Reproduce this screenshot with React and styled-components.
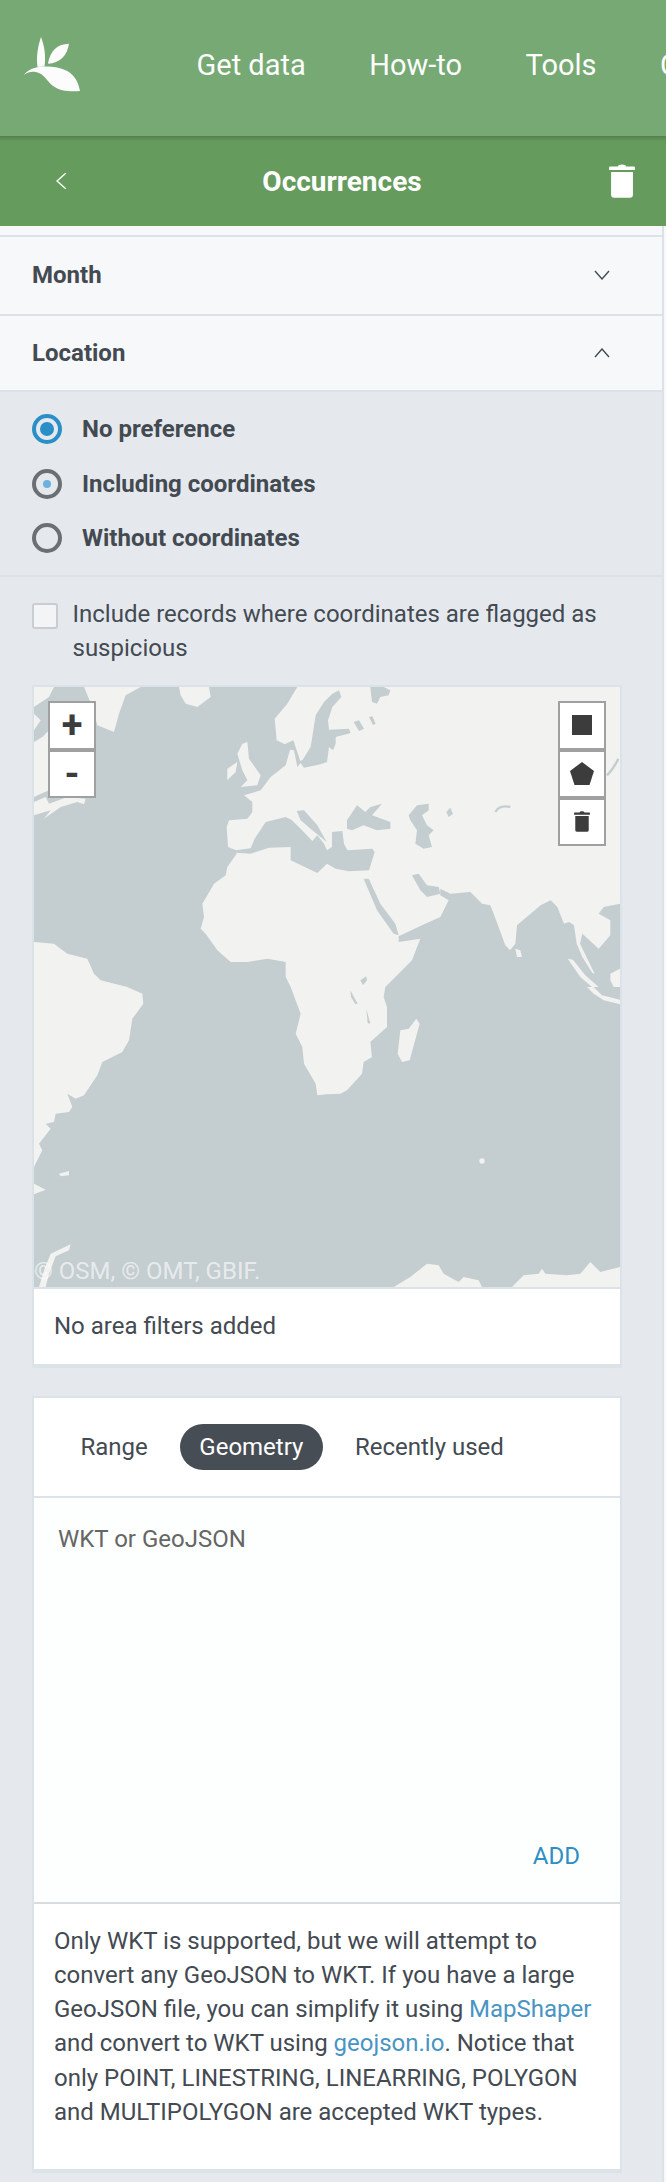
import styled, { createGlobalStyle } from "styled-components";

const GlobalStyle = createGlobalStyle`
  html, body {
    margin: 0;
    padding: 0;
    background: #f7f8fa;
  }
  * {
    box-sizing: border-box;
  }
`;

const Page = styled.div`
  width: 666px;
  height: 2182px;
  overflow: hidden;
  font-family: Roboto, "Liberation Sans", sans-serif;
  color: #434a52;
  background: #f7f8fa;
`;

const TopBar = styled.header`
  height: 136px;
  display: flex;
  align-items: center;
  padding: 0 0 6px 24px;
  background: #77a974;
  overflow: hidden;
`;

const Logo = styled.svg`
  width: 56px;
  height: 56px;
  flex: none;
  margin-right: 116.5px;
`;

const Nav = styled.nav`
  display: flex;
  gap: 63.5px;
  white-space: nowrap;
`;

const NavItem = styled.span`
  font-size: 29px;
  color: #fdfdfd;
`;

const SubBar = styled.div`
  height: 90px;
  display: flex;
  align-items: center;
  justify-content: space-between;
  position: relative;
  padding: 0 31px 0 56px;
  background: linear-gradient(#557f4f 0, #659b5c 5px);
`;

const SubTitle = styled.h1`
  position: absolute;
  left: 18px;
  right: 0;
  margin: 0;
  text-align: center;
  font-size: 28px;
  font-weight: 700;
  color: #fff;
`;

const Content = styled.main`
  width: 664px;
  height: 1956px;
  padding-top: 9px;
  border-right: 2px solid #dde2e8;
  background: linear-gradient(#f7f8fa 0, #f7f8fa 10px, #e5e9ed 10px);
`;

const Accordion = styled.div`
  height: ${(p) => p.$h}px;
  display: flex;
  align-items: center;
  justify-content: space-between;
  padding: 0 52px ${(p) => (p.$first ? 1 : 0)}px 32px;
  background: #f7f8fa;
  border-top: ${(p) => (p.$first ? "2px solid #dde2e8" : "0")};
  border-bottom: 2px solid #dde2e8;
  font-size: 24px;
  font-weight: 700;
`;

const Radios = styled.div`
  padding: 10px 32px 9px;
  border-bottom: 2px solid #dde2e8;
`;

const RadioRow = styled.div`
  height: 54.5px;
  display: flex;
  align-items: center;
  gap: 20px;
  font-size: 24px;
  font-weight: 700;
`;

const RadioMark = styled.span`
  width: 30px;
  height: 30px;
  flex: none;
  display: flex;
  align-items: center;
  justify-content: center;
  border-radius: 50%;
  border: 4px solid ${(p) => (p.$on ? "#2a8fc7" : "#6b6f73")};

  &::after {
    content: "";
    width: ${(p) => (p.$on ? 14 : p.$half ? 8 : 0)}px;
    height: ${(p) => (p.$on ? 14 : p.$half ? 8 : 0)}px;
    border-radius: 50%;
    background: ${(p) => (p.$on ? "#2a8fc7" : "#6cb2dc")};
  }
`;

const CheckRow = styled.div`
  display: flex;
  gap: 14.5px;
  padding: 20px 32px;
  font-size: 24px;
  line-height: 34px;
`;

const CheckBox = styled.span`
  width: 26px;
  height: 26px;
  flex: none;
  margin-top: 6px;
  border: 2px solid #c9ccd0;
  border-radius: 3px;
  background: #f2f4f6;
`;

const Card = styled.section`
  width: 590px;
  margin: ${(p) => p.$mt || 0}px 0 0 32px;
  border: 2px solid #dbe2e8;
  border-bottom-width: 4px;
  background: #fff;
`;

const MapWrap = styled.div`
  position: relative;
  height: 600px;
  background: #c4cdcf;
  overflow: hidden;
`;

const MapSvg = styled.svg`
  display: block;
  width: 586px;
  height: 600px;
  filter: blur(0.5px);
`;

const Credit = styled.span`
  position: absolute;
  left: 0;
  bottom: 2px;
  font-size: 24px;
  color: rgba(255, 255, 255, 0.62);
  white-space: nowrap;
`;

const ToolStack = styled.div`
  position: absolute;
  top: 14px;
  ${(p) => (p.$right ? "right: 14px;" : "left: 14px;")}
  width: 48px;
  display: flex;
  flex-direction: column;
`;

const ToolBtn = styled.div`
  width: 48px;
  height: 49px;
  margin-bottom: -1px;
  display: flex;
  align-items: center;
  justify-content: center;
  background: #fff;
  border: 2px solid #a0a0a0;
  color: #3c3c3c;
  font-size: 38px;
  font-weight: 700;
  line-height: 1;

  & + & {
    border-top-width: 3px;
  }
`;

const CardNote = styled.div`
  height: 77px;
  display: flex;
  align-items: center;
  padding-left: 20px;
  border-top: 2px solid #dbe2e8;
  font-size: 24px;
`;

const Tabs = styled.div`
  height: 100px;
  display: flex;
  align-items: center;
  padding-left: 27px;
  gap: 12.5px;
  border-bottom: 2px solid #dbe2e8;
`;

const Tab = styled.span`
  height: 46px;
  display: flex;
  align-items: center;
  padding: 0 19.5px;
  border-radius: 23px;
  font-size: 24px;
  color: ${(p) => (p.$on ? "#fff" : "#434a52")};
  background: ${(p) => (p.$on ? "#474d55" : "transparent")};
`;

const Editor = styled.div`
  height: 404px;
  padding: 24px 24px 0;
  position: relative;
  background: #fdfffe;
  font-size: 24px;
  line-height: 34px;
  color: #666;
`;

const AddLink = styled.span`
  position: absolute;
  right: 40px;
  top: 341px;
  color: #2d8fc4;
`;

const Help = styled.p`
  height: 267px;
  margin: 0;
  padding: 20px 20px 0;
  border-top: 2px solid #d8dcde;
  font-size: 24px;
  line-height: 34.3px;
`;

const HelpLink = styled.a`
  color: #4a94c4;
  text-decoration: none;
`;

const toPath = (pts) => "M" + pts.map((p) => p.join(",")).join("L") + "Z";

// land and water traced from the map, in 3x pixel coordinates
const LAND = [
  // eurasia + africa
  [[790,0],[1758,0],[1758,650],[1709,660],[1694,680],[1729,700],[1729,745],[1694,785],[1645,740],[1638,770],[1660,815],[1682,860],[1675,858],[1645,810],[1628,770],[1620,715],[1605,705],[1590,710],[1570,660],[1550,640],[1520,655],[1449,715],[1444,770],[1428,790],[1414,775],[1379,680],[1369,655],[1344,650],[1309,615],[1249,620],[1219,605],[1219,625],[1244,640],[1219,690],[1164,715],[1094,748],[1094,765],[1159,755],[1134,820],[1054,900],[1049,930],[1059,960],[1059,1020],[1009,1065],[1014,1110],[989,1125],[984,1160],[939,1210],[919,1220],[879,1222],[850,1225],[845,1190],[810,1130],[805,1080],[785,1040],[800,980],[770,900],[755,870],[755,825],[700,815],[640,825],[590,825],[550,790],[515,740],[500,725],[510,690],[505,650],[540,590],[575,565],[580,540],[608,500],[606,490],[582,480],[578,420],[585,400],[640,395],[655,375],[655,345],[630,325],[680,310],[710,270],[755,235],[768,188],[780,190],[790,240],[800,228],[795,210],[778,160],[752,172],[728,160],[722,95],[760,50]],
  // greenland
  [[150,0],[175,60],[190,115],[240,135],[255,80],[275,25],[320,0]],
  // canada
  [[0,0],[60,0],[45,30],[0,60]],
  [[0,80],[20,100],[0,130]],
  [[0,165],[25,150],[45,130],[45,310],[0,330]],
  [[0,345],[35,330],[45,350],[100,330],[155,335],[150,352],[130,345],[80,360],[30,395],[50,370],[0,385]],
  // iceland
  [[435,0],[525,0],[530,30],[490,60],[455,50],[440,25]],
  // britain, ireland
  [[625,170],[640,165],[645,215],[680,265],[670,295],[620,300],[640,280],[625,250],[610,200]],
  [[580,245],[610,225],[605,255],[580,280]],
  // south america
  [[0,765],[60,770],[100,800],[160,815],[180,860],[200,880],[280,900],[325,920],[328,950],[295,995],[285,1060],[265,1095],[205,1125],[190,1165],[150,1225],[125,1235],[100,1220],[115,1260],[105,1275],[65,1280],[60,1305],[35,1310],[50,1325],[15,1370],[25,1390],[0,1440]],
  [[0,1490],[35,1508],[0,1522]],
  [[75,1460],[105,1452],[105,1465],[80,1468]],
  // antarctic peninsula
  [[110,1672],[105,1690],[65,1708],[45,1760],[35,1800],[15,1800],[30,1750],[50,1700]],
  // antarctica
  [[1079,1800],[1129,1770],[1179,1730],[1214,1735],[1229,1760],[1274,1785],[1289,1770],[1334,1780],[1344,1800]],
  [[1434,1800],[1469,1765],[1514,1760],[1524,1745],[1534,1760],[1599,1765],[1639,1760],[1669,1725],[1699,1755],[1758,1740],[1758,1800]],
  // madagascar
  [[1147,995],[1157,1010],[1127,1120],[1104,1125],[1091,1100],[1099,1030],[1124,1025]],
  // sumatra, java, borneo
  [[1601,815],[1617,818],[1654,865],[1694,900],[1674,900],[1639,870]],
  [[1659,900],[1679,900],[1704,925],[1758,938],[1758,952],[1709,940],[1679,920]],
  [[1729,860],[1758,845],[1758,900],[1739,900],[1729,880]],
  // sri lanka
  [[1444,785],[1459,790],[1464,810],[1449,810]],
  // med islands
  [[752,430],[765,432],[765,455],[752,455]],
  [[795,470],[822,478],[808,484]],
  [[890,500],[912,498],[908,506]],
];

const WATER = [
  // baltic
  [[915,10],[922,30],[895,60],[882,100],[885,128],[945,125],[950,138],[905,150],[905,170],[897,190],[885,180],[879,225],[860,232],[810,242],[795,222],[805,220],[830,180],[838,130],[845,85],[870,45],[895,20]],
  // white sea
  [[1009,0],[1014,45],[1029,50],[1039,30],[1064,25],[1069,10],[1049,0]],
  // ladoga, onega
  [[959,105],[975,100],[990,125],[975,132]],
  [[1005,90],[1015,88],[1025,110],[1017,114]],
  // mediterranean
  [[606,490],[650,484],[662,455],[695,405],[755,390],[772,398],[800,425],[835,462],[850,445],[870,470],[879,490],[894,480],[894,435],[925,432],[930,470],[940,490],[1015,485],[1022,495],[1005,550],[945,553],[905,545],[879,530],[850,558],[770,520],[770,480],[705,482],[650,500],[606,497]],
  // adriatic
  [[788,372],[810,370],[850,415],[878,465],[860,450],[835,430],[800,400]],
  // black sea
  [[939,400],[969,355],[994,375],[1009,360],[1044,350],[1014,385],[1069,405],[1069,425],[1029,430],[989,415],[954,430],[939,425]],
  // caspian, aral
  [[1124,385],[1149,355],[1184,350],[1184,370],[1164,385],[1179,415],[1199,430],[1184,445],[1194,480],[1169,485],[1144,470],[1149,430],[1129,400]],
  [[1237,375],[1249,362],[1257,380],[1244,390]],
  // red sea
  [[989,575],[1004,575],[1039,650],[1084,710],[1094,745],[1079,740],[1029,670]],
  // persian gulf
  [[1134,565],[1154,560],[1179,595],[1214,600],[1219,620],[1179,630],[1159,610]],
  // african lakes
  [[979,880],[997,868],[999,880],[987,895]],
  [[949,910],[971,950],[964,952],[951,930]],
  [[997,965],[1009,1010],[1001,1008]],
];

function WorldMap() {
  return (
    <MapSvg viewBox="0 0 1758 1800">
      {LAND.map((pts, i) => (
        <path key={i} d={toPath(pts)} fill="#f2f2f0" />
      ))}
      {WATER.map((pts, i) => (
        <path key={i} d={toPath(pts)} fill="#c4cdcf" />
      ))}
      <path d="M1384 375q12-22 45-15" fill="none" stroke="#c4cdcf" strokeWidth="7" />
      <path d="M1719 265q20-20 34-50" fill="none" stroke="#c4cdcf" strokeWidth="7" />
      <circle cx="1344" cy="1422" r="8" fill="#f2f2f0" />
    </MapSvg>
  );
}

function Trash({ size, color }) {
  return (
    <svg width={size} height={size * 1.3} viewBox="0 0 26 34" fill={color}>
      <path d="M9 2.5Q9 .5 13 .5T17 2.5H25Q26 2.5 26 3.5V6H0V3.5Q0 2.5 1 2.5Z" />
      <path d="M2 8H24V31Q24 34 21 34H5Q2 34 2 31Z" />
    </svg>
  );
}

function Chevron({ dir }) {
  const d = {
    left: "M10 0 L1 8 L10 16",
    down: "M1 1 L8 9 L15 1",
    up: "M1 9 L8 1 L15 9",
  }[dir];
  const w = dir === "left" ? 11 : 16;
  const h = dir === "left" ? 16 : 10;
  return (
    <svg width={w} height={h} viewBox={`0 0 ${w} ${h}`} fill="none" stroke={dir === "left" ? "#fff" : "#434a52"} strokeWidth="1.4">
      <path d={d} />
    </svg>
  );
}

export default function App() {
  return (
    <Page>
      <GlobalStyle />
      <TopBar>
        <Logo viewBox="24 39 56 56" fill="#fcfcfc">
          <path d="M41 39C38 48 36 58 37.5 69L44.5 68.5C46 58 44.5 48 41 39Z" />
          <path d="M69 45.7C58 46 50 52 48 65.7C60 65 67 58 69 45.7Z" />
          <path d="M24 77C27 72 34 69 45 68.5C58 68 70 72 75 80C78 84 79 89 80 93C70 94 60 93 53 88C48 84 45 78 40 75.5C35 73 29 73 24 77Z" />
        </Logo>
        <Nav>
          <NavItem>Get data</NavItem>
          <NavItem>How-to</NavItem>
          <NavItem>Tools</NavItem>
          <NavItem>Community</NavItem>
        </Nav>
      </TopBar>
      <SubBar>
        <Chevron dir="left" />
        <SubTitle>Occurrences</SubTitle>
        <Trash size={26} color="#fff" />
      </SubBar>
      <Content>
        <Accordion $first $h={81}>
          Month
          <Chevron dir="down" />
        </Accordion>
        <Accordion $h={76}>
          Location
          <Chevron dir="up" />
        </Accordion>
        <Radios>
          <RadioRow>
            <RadioMark $on />
            No preference
          </RadioRow>
          <RadioRow>
            <RadioMark $half />
            Including coordinates
          </RadioRow>
          <RadioRow>
            <RadioMark />
            Without coordinates
          </RadioRow>
        </Radios>
        <CheckRow>
          <CheckBox />
          <span>Include records where coordinates are flagged as suspicious</span>
        </CheckRow>
        <Card>
          <MapWrap>
            <WorldMap />
            <Credit>© OSM, © OMT, GBIF.</Credit>
            <ToolStack>
              <ToolBtn>+</ToolBtn>
              <ToolBtn>-</ToolBtn>
            </ToolStack>
            <ToolStack $right>
              <ToolBtn>
                <svg width="20" height="20" viewBox="0 0 20 20" fill="#3c3c3c">
                  <rect width="20" height="20" />
                </svg>
              </ToolBtn>
              <ToolBtn>
                <svg width="24" height="23" viewBox="0 0 24 23" fill="#3c3c3c">
                  <path d="M12 0L24 9L19.5 23H4.5L0 9Z" />
                </svg>
              </ToolBtn>
              <ToolBtn>
                <Trash size={16} color="#3c3c3c" />
              </ToolBtn>
            </ToolStack>
          </MapWrap>
          <CardNote>No area filters added</CardNote>
        </Card>
        <Card $mt={28}>
          <Tabs>
            <Tab>Range</Tab>
            <Tab $on>Geometry</Tab>
            <Tab>Recently used</Tab>
          </Tabs>
          <Editor>
            WKT or GeoJSON
            <AddLink>ADD</AddLink>
          </Editor>
          <Help>
            Only WKT is supported, but we will attempt to convert any GeoJSON to WKT. If you have a large GeoJSON file, you can simplify it using{" "}
            <HelpLink>MapShaper</HelpLink> and convert to WKT using <HelpLink>geojson.io</HelpLink>. Notice that only POINT, LINESTRING, LINEARRING, POLYGON and MULTIPOLYGON are accepted WKT types.
          </Help>
        </Card>
      </Content>
    </Page>
  );
}
